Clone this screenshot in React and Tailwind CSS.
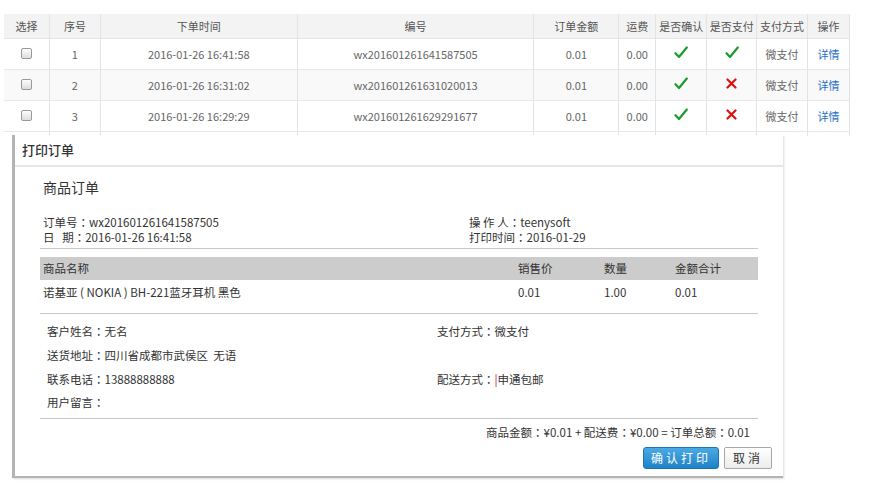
import React from "react";

const cols = [46, 51, 197, 237, 85, 37, 51, 50, 51, 41];
const headers = ["选择", "序号", "下单时间", "编号", "订单金额", "运费", "是否确认", "是否支付", "支付方式", "操作"];
const rows = [
  { n: "1", t: "2016-01-26 16:41:58", id: "wx201601261641587505", paid: true, bg: "bg-white" },
  { n: "2", t: "2016-01-26 16:31:02", id: "wx201601261631020013", paid: false, bg: "bg-[#f9f9f9]" },
  { n: "3", t: "2016-01-26 16:29:29", id: "wx201601261629291677", paid: false, bg: "bg-white" },
];

function Check() {
  return (
    <svg width="14" height="13" viewBox="0 0 14 13">
      <path d="M1.5 7.2 L5 11 L12.8 1.5" fill="none" stroke="#1c9a2c" strokeWidth="2.2" strokeLinecap="round" strokeLinejoin="round" />
    </svg>
  );
}
function Cross() {
  return (
    <svg width="11" height="11" viewBox="0 0 11 11">
      <path d="M1.5 1.5 L9.5 9.5 M9.5 1.5 L1.5 9.5" fill="none" stroke="#e01010" strokeWidth="2.2" strokeLinecap="round" />
    </svg>
  );
}

function C() {
  return <span className="font-['Noto_Sans_CJK_JP',sans-serif]">：</span>;
}

function Cell({ w, children, className = "" }) {
  return (
    <div style={{ width: w }} className={"flex items-center justify-center border-r border-[#e3e3e3] last:border-r-0 " + className}>
      {children}
    </div>
  );
}

export default function App() {
  return (
    <div className="relative w-[880px] h-[489px] bg-white overflow-hidden font-['Noto_Sans_CJK_SC','Liberation_Sans',sans-serif] text-[11px]">
      <div className="pt-[14px] pl-[4px]">
        <div className="w-[846px] border-r border-[#e3e3e3]">
          <div className="flex h-[25px] bg-[#f3f3f3] text-[#555] border-b border-[#e3e3e3]">
            {headers.map((h, i) => (
              <Cell key={h} w={cols[i]}>{h}</Cell>
            ))}
          </div>
          {rows.map((r) => (
            <div key={r.n} className={"flex h-[31px] text-[#666] border-b border-[#e8e8e8] " + r.bg}>
              <Cell w={cols[0]}>
                <span className="w-[11px] h-[11px] rounded-[2px] border border-[#999] bg-gradient-to-b from-[#fdfdfd] to-[#ddd] -mt-[2px]" />
              </Cell>
              <Cell w={cols[1]}>{r.n}</Cell>
              <Cell w={cols[2]}>{r.t}</Cell>
              <Cell w={cols[3]}>{r.id}</Cell>
              <Cell w={cols[4]}>0.01</Cell>
              <Cell w={cols[5]}>0.00</Cell>
              <Cell w={cols[6]}><span className="-mt-[4px]"><Check /></span></Cell>
              <Cell w={cols[7]}><span className="-mt-[4px]">{r.paid ? <Check /> : <Cross />}</span></Cell>
              <Cell w={cols[8]}>微支付</Cell>
              <Cell w={cols[9]}><span className="text-[#1f6fc5]">详情</span></Cell>
            </div>
          ))}
          <div className="flex h-[4px]">
            {cols.map((w, i) => (
              <Cell key={i} w={w} />
            ))}
          </div>
        </div>
      </div>

      {/* Dialog */}
      <div className="absolute left-[12px] top-[135px] w-[771px] h-[343px] bg-white border-l-[3px] border-b-2 border-[#b4b4b4] shadow-[1px_1px_2px_rgba(0,0,0,0.15)] text-[#333] text-[12px]">
        <div className="h-[32px] flex items-center pl-[7px] text-[13px] text-[#333] font-medium border-b-2 border-[#e6e6e6]">打印订单</div>
        <div className="pl-[25px] w-[743px]">
          <div className="h-[20px] mt-[10px] text-[14px] leading-[20px] pl-[3px]">商品订单</div>
          <div className="mt-[18px] flex pl-[3px] leading-[15px] text-[11.5px]">
            <div className="w-[426px]">
              <div>订单号<C />wx201601261641587505</div>
              <div>日&nbsp;&nbsp;&nbsp;期<C />2016-01-26 16:41:58</div>
            </div>
            <div>
              <div>操&nbsp;作&nbsp;人<C />teenysoft</div>
              <div>打印时间<C />2016-01-29</div>
            </div>
          </div>
          <div className="mt-[3px] h-px bg-[#c8c8c8]" />
          <div className="mt-[8px] grid grid-cols-[475px_86px_71px_85px] h-[23px] items-center bg-[#cccccc] text-[#333] pl-[3px] text-[11.5px]">
            <div>商品名称</div>
            <div>销售价</div>
            <div>数量</div>
            <div>金额合计</div>
          </div>
          <div className="grid grid-cols-[475px_86px_71px_85px] h-[26px] items-center pl-[3px] text-[11.5px]">
            <div>诺基亚 ( NOKIA ) BH-221蓝牙耳机 黑色</div>
            <div>0.01</div>
            <div>1.00</div>
            <div>0.01</div>
          </div>
          <div className="mt-[7px] h-px bg-[#c8c8c8]" />
          <div className="pl-[7px] pt-[6px] grid grid-cols-[390px_1fr] auto-rows-[23.7px] items-center text-[11.5px]">
            <div>客户姓名<C />无名</div>
            <div>支付方式<C />微支付</div>
            <div className="col-span-2">送货地址<C />四川省成都市武侯区&nbsp;&nbsp;无语</div>
            <div>联系电话<C />13888888888</div>
            <div>配送方式<C /><span className="text-[#c0003a]">|</span>申通包邮</div>
            <div className="col-span-2">用户留言<C /></div>
          </div>
          <div className="mt-[3px] h-px bg-[#c8c8c8]" />
          <div className="h-[28px] flex items-center justify-end pr-[8px] text-[11.5px]">
            商品金额<C />¥0.01 + 配送费<C />¥0.00 = 订单总额<C />0.01
          </div>
          <div className="flex justify-end gap-[5px] mr-[-14px]">
            <button className="w-[76px] h-[22px] rounded-[3px] border border-[#1b74b4] bg-gradient-to-b from-[#4aaae4] to-[#1d82c6] text-white text-[12px] tracking-[3px] flex items-center justify-center">确认打印</button>
            <button className="w-[48px] h-[22px] rounded-[2px] border border-[#a8a8a8] bg-gradient-to-b from-white to-[#ececec] text-[#333] text-[12px] tracking-[3px] flex items-center justify-center">取消</button>
          </div>
        </div>
      </div>
    </div>
  );
}
